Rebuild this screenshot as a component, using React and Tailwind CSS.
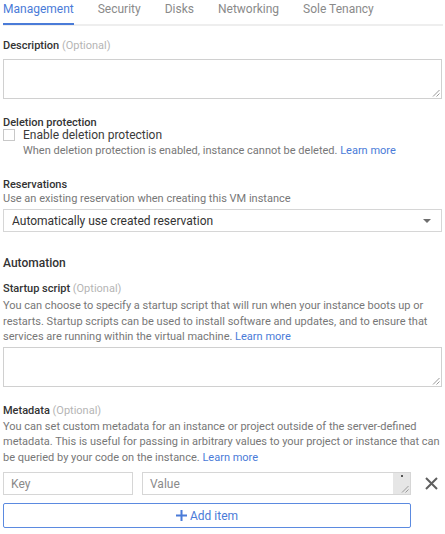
import React from 'react';

const tabs = ['Management', 'Security', 'Disks', 'Networking', 'Sole Tenancy'];

function Optional() {
  return <span className="font-normal text-[#b5b5b5]"> (Optional)</span>;
}

function LearnMore() {
  return <a className="text-[#4a7bd8]" href="#">Learn more</a>;
}

function Grip() {
  return (
    <svg width="12" height="12" viewBox="0 0 12 12" className="absolute bottom-0 right-0">
      <path d="M10.5 4 L4 10.5 M10.5 7.5 L7.5 10.5" stroke="#9a9a9a" strokeWidth="1" />
    </svg>
  );
}

function TextBox() {
  return (
    <div className="relative w-[439px] h-[40px] border border-[#d0d0d0] bg-white">
      <Grip />
    </div>
  );
}

export default function App() {
  return (
    <div className="w-[445px] h-[534px] overflow-hidden bg-white pl-[3px] text-[11px] text-[#777777]" style={{ fontFamily: 'Roboto, "Liberation Sans", sans-serif' }}>
      {/* tabs */}
      <div className="flex w-[440px] border-b-2 border-[#eeeeee] text-[12px] leading-[14px] h-[26px]">
        {tabs.map((t, i) => (
          <div
            key={t}
            className={`mr-[24px] pt-[2px] h-[25px] ${i === 0 ? 'text-[#4a7bd8] border-b-2 border-[#4a7bd8]' : 'text-[#8a8a8a]'}`}
          >
            {t}
          </div>
        ))}
      </div>

      <div className="mt-[13px] font-medium text-[#333] leading-[14px]">
        Description<Optional />
      </div>
      <div className="mt-[6px]">
        <TextBox />
      </div>

      <div className="mt-[17px] font-medium text-[#333] leading-[14px]">Deletion protection</div>
      <div className="flex items-center h-[14px] mt-[-2px]">
        <div className="w-[12px] h-[12px] border border-[#c8c8c8] bg-white"></div>
        <span className="ml-[8px] text-[12px] text-[#3a3a3a]">Enable deletion protection</span>
      </div>
      <div className="ml-[20px] mt-[1px] leading-[16px]">
        When deletion protection is enabled, instance cannot be deleted. <LearnMore />
      </div>

      <div className="mt-[19px] font-medium text-[#333] leading-[14px]">Reservations</div>
      <div className="leading-[14px]">Use an existing reservation when creating this VM instance</div>
      <div className="mt-[3px] relative w-[439px] h-[23px] border border-[#d6d6d6] flex items-center pl-[8px] text-[12px] text-[#333]">
        Automatically use created reservation
        <svg width="8" height="4" viewBox="0 0 8 4" className="absolute right-[10px] top-[9px]">
          <path d="M0 0 L8 0 L4 4 Z" fill="#6e6e6e" />
        </svg>
      </div>

      <div className="mt-[24px] text-[12px] font-medium text-[#333] leading-[14px]">Automation</div>

      <div className="mt-[12px] font-medium text-[#333] leading-[14px]">
        Startup script<Optional />
      </div>
      <div className="mt-[2px] leading-[15.5px]">
        You can choose to specify a startup script that will run when your instance boots up or restarts. Startup scripts can be used to install software and updates, and to ensure that services are running within the virtual machine. <LearnMore />
      </div>
      <div className="mt-[2px]">
        <TextBox />
      </div>

      <div className="mt-[17px] font-medium text-[#333] leading-[14px]">
        Metadata<Optional />
      </div>
      <div className="mt-[1px] leading-[15.5px]">
        You can set custom metadata for an instance or project outside of the server-defined metadata. This is useful for passing in arbitrary values to your project or instance that can be queried by your code on the instance. <LearnMore />
      </div>

      <div className="mt-[7px] flex items-center">
        <div className="w-[130px] h-[23px] border border-[#d6d6d6] flex items-center pl-[7px] text-[12px] text-[#8a8a8a]">Key</div>
        <div className="ml-[9px] relative w-[269px] h-[23px] border border-[#d6d6d6] flex items-center pl-[7px] text-[12px] text-[#8a8a8a]">
          Value
          <div className="absolute top-0 right-0 bottom-0 w-[17px] bg-[#e6e6e6]">
            <div className="mx-auto mt-[2px] w-[2px] h-[2px] bg-[#555]"></div>
            <Grip />
          </div>
        </div>
        <svg width="13" height="13" viewBox="0 0 13 13" className="ml-[14px]">
          <path d="M1 1 L12 12 M12 1 L1 12" stroke="#5f5f5f" strokeWidth="2" />
        </svg>
      </div>

      <button className="mt-[8px] w-[408px] h-[25px] border border-[#5b8ae0] rounded-[2px] flex items-center justify-center text-[12px] text-[#4a7bd8]">
        <svg width="11" height="11" viewBox="0 0 11 11" className="mr-[3px]">
          <path d="M5.5 0 V11 M0 5.5 H11" stroke="#4a7bd8" strokeWidth="2" />
        </svg>
        Add item
      </button>
    </div>
  );
}
